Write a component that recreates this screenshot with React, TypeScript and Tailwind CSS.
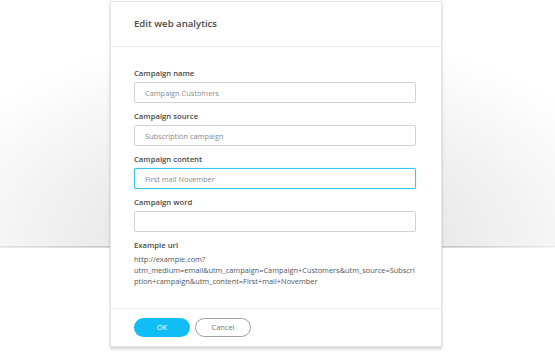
import React from 'react'

interface FieldProps {
  label: string
  value: string
  focused?: boolean
}

const Field = ({ label, value, focused }: FieldProps): React.ReactElement => (
  <div className="flex flex-col">
    <label className="h-[12px] text-[7.7px] font-semibold leading-[12px] text-[#4a4a4a]">{label}</label>
    <input
      readOnly
      value={value}
      className={`mt-[3px] mb-[7px] h-[21px] w-[282px] rounded-[2px] border bg-white px-[10px] text-[7.4px] text-[#8a8a8a] outline-none ${
        focused ? 'border-[#35c5f4] shadow-[0_0_1px_#35c5f4]' : 'border-[#d2d2d2]'
      }`}
    />
  </div>
)

const App = (): React.ReactElement => {
  const fields: FieldProps[] = [
    { label: 'Campaign name', value: 'Campaign Customers' },
    { label: 'Campaign source', value: 'Subscription campaign' },
    { label: 'Campaign content', value: 'First mail November', focused: true },
    { label: 'Campaign word', value: '' }
  ]

  return (
    <div
      className="flex h-[352px] w-[555px] overflow-hidden bg-white bg-no-repeat pt-px pl-[110px] font-['Open_Sans',sans-serif] bg-[radial-gradient(ellipse_380px_220px_at_50%_100%,rgba(0,0,0,0.15),rgba(0,0,0,0.05)_65%,rgba(0,0,0,0)),linear-gradient(to_right,#ececec,#d9d9d9_18%,#d9d9d9_82%,#f6f6f6)] [background-size:100%_247px,100%_2px] [background-position:0_0,0_246px]"
    >
      <div className="flex h-[346px] w-[332px] flex-col border border-[#e4e4e4] bg-white shadow-[0_2px_3px_rgba(0,0,0,0.18)]">
        <div className="flex h-[45px] shrink-0 items-center border-b border-[#ececec] px-[23px]">
          <span className="text-[9.6px] font-semibold text-[#4a4a4a]">Edit web analytics</span>
        </div>

        <div className="flex flex-1 flex-col px-[23px] pt-[20px]">
          {fields.map((field) => (
            <Field key={field.label} {...field} />
          ))}
          <span className="h-[12px] text-[7.7px] font-semibold leading-[12px] text-[#4a4a4a]">Example url</span>
          <p className="mt-[3px] w-[282px] break-all text-[7.4px] leading-[11px] text-[#555]">
            http://example.com?
            <br />
            utm_medium=email&amp;utm_campaign=Campaign+Customers&amp;utm_source=Subscription+campaign&amp;utm_content=First+mail+November
          </p>
        </div>

        <div className="flex h-[38px] shrink-0 items-center gap-[5px] border-t border-[#ececec] px-[23px]">
          <button
            type="button"
            className="h-[19px] w-[56px] rounded-full bg-[#11bdf5] text-[7.4px] text-white"
          >
            OK
          </button>
          <button
            type="button"
            className="h-[19px] w-[56px] rounded-full border border-[#a0a0a0] bg-white text-[7.4px] text-[#777]"
          >
            Cancel
          </button>
        </div>
      </div>
    </div>
  )
}

export default App
